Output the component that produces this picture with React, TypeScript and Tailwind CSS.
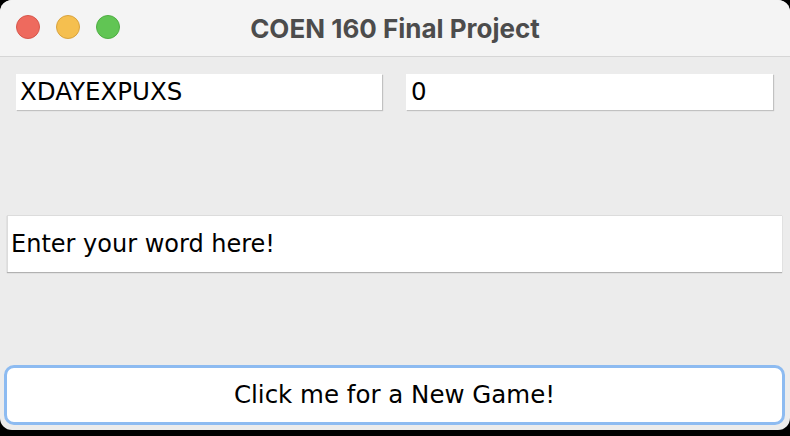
export default function App() {
  return (
    <div className="w-[790px] h-[436px] bg-black overflow-hidden" style={{ fontFamily: '"DejaVu Sans", "Liberation Sans", sans-serif' }}>
      <div className="h-[430px] rounded-[12px] overflow-hidden bg-[#ececec] flex flex-col">
        <div className="h-[57px] shrink-0 bg-[#f4f4f4] border-b border-[#d6d6d6] relative flex items-center justify-center">
          <div className="absolute left-[16px] top-[15px] flex gap-[16px]">
            <span className="w-[24px] h-[24px] rounded-full bg-[#ee6a5e] border border-[#d7574c]" />
            <span className="w-[24px] h-[24px] rounded-full bg-[#f5bf4f] border border-[#d9a33e]" />
            <span className="w-[24px] h-[24px] rounded-full bg-[#61c554] border border-[#4fae43]" />
          </div>
          <span className="text-[26px] font-bold text-[#4c4c4c] tracking-[0px]" style={{ fontFamily: '"Inter", "Liberation Sans", sans-serif' }}>
            COEN 160 Final Project
          </span>
        </div>

        <div className="flex flex-col flex-1">
          <div className="flex gap-[24px] pl-[16px] pr-[17px] mt-[17px]">
            <div className="w-[366px] h-[36px] bg-white shadow-[1px_1px_1px_rgba(0,0,0,0.18)] flex items-center pl-[4px] text-[24.5px] text-black">
              XDAYEXPUXS
            </div>
            <div className="w-[367px] h-[36px] bg-white shadow-[1px_1px_1px_rgba(0,0,0,0.18)] flex items-center pl-[5px] text-[24.5px] text-black">
              0
            </div>
          </div>

          <div className="ml-[7px] mt-[105px] w-[775px] h-[57px] bg-white border-l border-t border-[#dcdcdc] shadow-[0_1px_1px_rgba(0,0,0,0.25)] flex items-center pl-[3px] text-[24px] text-black">
            Enter your word here!
          </div>

          <button className="ml-[4px] mt-[93px] w-[781px] h-[60px] bg-white rounded-[10px] border-[3px] border-[#8dbbf1] flex items-center justify-center text-[24.5px] text-black">
            Click me for a New Game!
          </button>
        </div>
      </div>
    </div>
  );
}
